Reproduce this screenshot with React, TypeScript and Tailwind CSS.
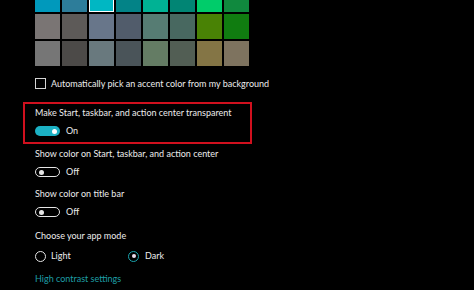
import React from 'react';

// Windows 10 accent palette (the three visible rows)
const swatches = [
  ['#0099BC', '#2D7D9A', '#00B7C3', '#038387', '#00B294', '#018574', '#00CC6A', '#10893E'],
  ['#7A7574', '#5D5A58', '#68768A', '#515C6B', '#567C73', '#486860', '#498205', '#107C10'],
  ['#767676', '#4C4A48', '#69797E', '#4A5459', '#647C64', '#525E54', '#847545', '#7E735F'],
];

const Toggle: React.FC<{ on: boolean; label: string }> = ({ on, label }) => (
  <div className="flex items-center h-[14px] gap-[6px]">
    {on ? (
      <div className="w-[25px] h-[10px] rounded-full bg-[#1bb1c4] flex items-center justify-end pr-[3px]">
        <div className="w-[5px] h-[5px] rounded-full bg-white" />
      </div>
    ) : (
      <div className="w-[25px] h-[10px] rounded-full border border-[#e6e6e6] flex items-center pl-[3px]">
        <div className="w-[5px] h-[5px] rounded-full bg-[#e6e6e6]" />
      </div>
    )}
    <span>{label}</span>
  </div>
);

export default function App() {
  return (
    <div
      className="w-[474px] h-[290px] bg-black overflow-hidden text-[#ececec] text-[9px] leading-[14px] whitespace-nowrap"
      style={{ fontFamily: 'Lato, "Liberation Sans", sans-serif' }}
    >
      <div className="pl-[35px]">
        {/* Accent colour grid */}
        <div className="grid grid-cols-[repeat(8,25px)] auto-rows-[25px] gap-[2px] mt-[-13px]">
          {swatches.flat().map((c, i) => (
            <div
              key={i}
              className={i === 2 ? 'border-[1.5px] border-white' : ''}
              style={{ backgroundColor: c }}
            />
          ))}
        </div>

        <div className="flex items-center h-[15px] mt-[10px] gap-[5px]">
          <div className="w-[11px] h-[11px] border border-[#d4d4d4]" />
          <span>Automatically pick an accent color from my background</span>
        </div>

        <div className="-ml-[12px] w-[229px] mt-[11px] border-2 border-[#d0101e] pl-[10px] pt-[2px] pb-[4px]">
          <div>Make Start, taskbar, and action center transparent</div>
          <div className="mt-[4px]">
            <Toggle on label="On" />
          </div>
        </div>

        <div className="mt-[3px]">Show color on Start, taskbar, and action center</div>
        <div className="mt-[4px]">
          <Toggle on={false} label="Off" />
        </div>

        <div className="mt-[8px]">Show color on title bar</div>
        <div className="mt-[4px]">
          <Toggle on={false} label="Off" />
        </div>

        <div className="mt-[10px]">Choose your app mode</div>
        <div className="flex items-center h-[14px] mt-[6px]">
          <div className="w-[93px] flex items-center gap-[5px]">
            <div className="w-[11px] h-[11px] rounded-full border-[1.5px] border-[#e6e6e6]" />
            <span>Light</span>
          </div>
          <div className="flex items-center gap-[6px]">
            <div className="w-[11px] h-[11px] rounded-full border-[1.5px] border-[#1aa3ad] flex items-center justify-center">
              <div className="w-[4px] h-[4px] rounded-full bg-[#ecdcec]" />
            </div>
            <span>Dark</span>
          </div>
        </div>

        <div className="mt-[9px] text-[#1e9ea6]">High contrast settings</div>
      </div>
    </div>
  );
}
